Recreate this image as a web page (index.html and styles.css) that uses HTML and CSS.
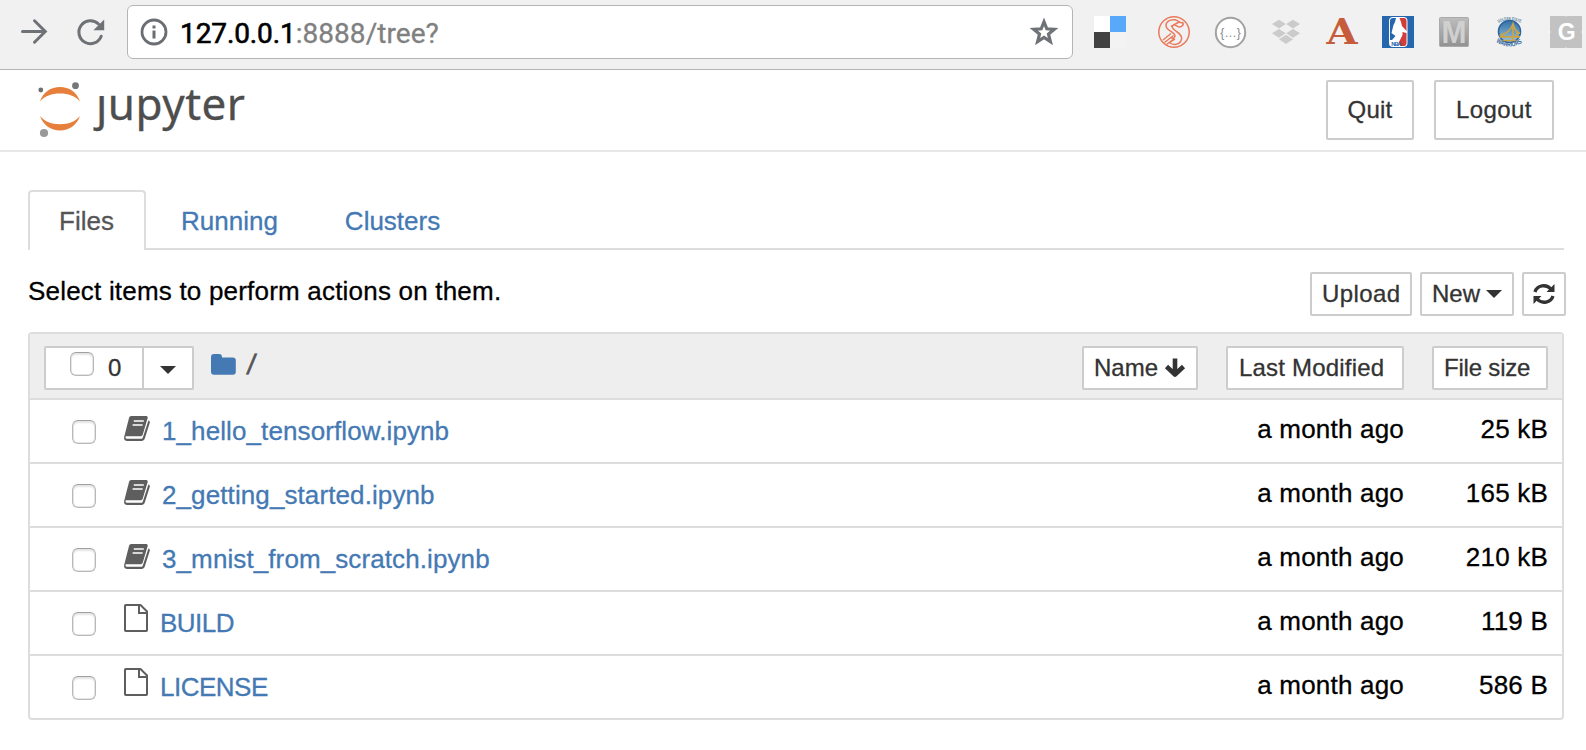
FILE: index.html
```
<!DOCTYPE html>
<html lang="en">
<head>
<meta charset="utf-8">
<title>Home</title>
<link rel="stylesheet" href="styles.css">
</head>
<body>
<svg class="defs" width="0" height="0">
  <symbol id="book" viewBox="0 0 26 25">
    <path d="M7.200 0H22c1.300 0 2 .9 1.600 2.200L18.800 18.500c-.4 1.200-1.300 1.800-2.500 1.800H3c-1.200 0-1.800.6-1.500 1.500.3.800.9 1 1.800 1h13.600c1 0 1.700-.5 2-1.500L24.400 4.500c1.200.3 1.700 1.200 1.400 2.300l-5 15.700c-.5 1.500-1.600 2.500-3.200 2.500H3.200C1.300 25-.4 23.200.1 21.200L5 2C5.400.7 6 0 7.200 0z" fill="#5e5e5e"/>
    <path d="M9.800 5h10M8.600 9h10" stroke="#fff" stroke-width="1.500"/>
  </symbol>
  <symbol id="page" viewBox="0 0 24 28">
    <path d="M1 1.800Q1 1 1.800 1H16.500L23 7.500V26.200q0 .8-.8.800H1.800q-.8 0-.8-.8zM15 1v8h8" fill="none" stroke="#5e5e5e" stroke-width="2"/>
  </symbol>
  <symbol id="caret" viewBox="0 0 16 8"><path d="M0 0h16L8 8z" fill="#333"/></symbol>
</svg>

<div class="toolbar">
  <svg class="forward" width="28" height="28" viewBox="0 0 28 28"><path d="M2.500 13.500h22M14.500 2.800l10.800 10.700L14.500 24.200" fill="none" stroke="#6e7277" stroke-width="3" stroke-linecap="round" stroke-linejoin="miter"/></svg>
  <svg class="reload" width="28" height="28" viewBox="0 0 28 28"><path d="M24.200 18.200A11.500 11.500 0 1 1 21.500 6" fill="none" stroke="#6e7277" stroke-width="3" stroke-linecap="round"/><path d="M27.200 1.500v10.800H16.400z" fill="#6e7277"/></svg>
  <div class="address">
    <svg width="28" height="28" viewBox="0 0 28 28"><circle cx="14" cy="14" r="12" fill="none" stroke="#6a6e73" stroke-width="2.800"/><path d="M12.500 7.500h3v3h-3zM12.500 12.500h3v8h-3z" fill="#6a6e73"/></svg>
    <div class="url"><span class="host">127.0.0.1</span><span class="path">:8888/tree?</span></div>
    <svg class="star" width="30" height="30" viewBox="0 0 30 30"><path d="M15 4.800l2.800 7 7.500.5-5.800 4.800 1.900 7.500-6.400-4.100-6.400 4.100 1.900-7.500-5.800-4.800 7.500-.5z" fill="none" stroke="#6e7277" stroke-width="3.200"/></svg>
  </div>
  <div class="extensions">
    <svg class="first" width="32" height="32"><path d="M0 0h16v16H0z" fill="#fff"/><path d="M16 0h16v16H16z" fill="#58a9fa"/><path d="M0 16h16v16H0z" fill="#424242"/><path d="M16 16h16v16H16z" fill="#f3f3f3"/></svg>
    <svg width="32" height="32" fill="none" stroke="#ea7a5c" stroke-width="1.500"><circle cx="16" cy="16" r="15.200"/><path d="M25 6.500c-3 1.500-4-1.800-8-2.700-5-.8-9.500 2-9 6.200.4 5 9.500 6 9 10.200-.3 2.500-3.500 2.300-5 1.300M25 6.500c1 2-1 4.500-3.500 4.500-3 0-4-3-6-2-3 1.800 0 4.500 3 6.500 4 2.500 6.500 6 4.200 10-2.200 3.500-7.500 4-11.700 1M5 24l8-6.500M6.500 26.500l9-7M8.500 28.500l8-6M13 10.500l8-4.500M11 27l6-4"/></svg>
    <svg width="32" height="32"><circle cx="16.500" cy="16.500" r="14.700" fill="#fff" stroke="#a2a2a2" stroke-width="2"/><text x="16.800" y="20.500" text-anchor="middle" class="json">{...}</text></svg>
    <svg width="32" height="32" fill="#cbcbcb"><path d="M2 8l7-4.200L15.800 8 9 12.500zM16.200 8L23 3.800 30 8l-7 4.500zM2 17.200l7-4.200 6.800 4.200L9 21.700zM16.200 17.200L23 13l7 4.200-7 4.500zM9 23.200l7-4.500 7 4.500-7 4.800z"/></svg>
    <svg width="32" height="32"><text x="0.500" y="28" class="slab" textLength="31" lengthAdjust="spacingAndGlyphs">A</text></svg>
    <svg width="32" height="32"><path d="M0 0h32v32H0z" fill="#2467ae"/><rect x="7" y="1" width="18.500" height="30" rx="4" fill="#fff"/><path d="M17.500 2h4.500q2.500 0 2.500 3v22q0 3-2.500 3h-4l-1-4 3.500-7 0-3 4 1 0-2-4.500-5-1-4z" fill="#d23d3a"/><path d="M8 5q0-3 3-3h3l-1 4-1.500 3-2 8 4 3-3.500 4H8z" fill="#2467ae"/><text x="9.200" y="29.800" class="nba" textLength="10.500">NBA</text></svg>
    <svg width="32" height="32"><defs><linearGradient id="mg" x2="0" y2="1"><stop stop-color="#bdbdbd"/><stop offset="1" stop-color="#929292"/></linearGradient></defs><rect x="1.500" y="1.500" width="29" height="29" rx="1" fill="url(#mg)" stroke="#aaa"/><text x="3.500" y="27" class="mono-m" textLength="25" lengthAdjust="spacingAndGlyphs">M</text></svg>
    <svg width="32" height="32"><defs><linearGradient id="wg" x2="0" y2="1"><stop stop-color="#316fa8"/><stop offset="1" stop-color="#9fc4dc"/></linearGradient><path id="top" d="M4.500 7Q15 1 26.500 7"/><path id="bot" d="M2 26q13.500 9 27 0"/></defs><circle cx="15.500" cy="15.500" r="11" fill="url(#wg)" stroke="#2e659c" stroke-width="1.600"/><path d="M5.500 19q10-1 13.500-11 2 8 7 9.500M5.500 20.800h20.500M8 24.500h15M19 8v16M9 18v4M23 15v7" fill="none" stroke="#c9a548" stroke-width="1.700"/><text class="ring"><textPath href="#top" textLength="23" lengthAdjust="spacingAndGlyphs">GOLDEN STATE</textPath></text><text class="ring low"><textPath href="#bot" textLength="28" lengthAdjust="spacingAndGlyphs">WARRIORS</textPath></text></svg>
    <svg width="32" height="32"><path d="M0 0h15l1 .8L17 0h15v15l-.8 1 .8 1v15H17l-1-.8-1 .8H0V17l.8-1-.8-1z" fill="#c2c2c2"/><text x="16.700" y="24" text-anchor="middle" class="g">G</text></svg>
  </div>
</div>

<header class="header">
  <div class="logo">
    <svg width="44" height="56" viewBox="0 0 44 56"><g fill="#e67f3c"><path d="M2 19.500C5 10 13 5 22 5s17 5 20 14.500C37 14 30.500 11.600 22 11.600S7 14 2 19.500z"/><path d="M2 34C5 43 13 48.500 22 48.500S39 43 42 34c-5 5.800-11.500 8.200-20 8.200S7 39.800 2 34z"/></g><circle cx="2.800" cy="8" r="2.400" fill="#6f6f6f"/><circle cx="37.500" cy="3.700" r="3.400" fill="#777"/><circle cx="6" cy="51" r="4.100" fill="#999"/></svg>
    <div class="wordmark"><span class="j">j</span>upyter</div>
  </div>
  <div class="session">
    <button class="btn big quit">Quit</button>
    <button class="btn big logout">Logout</button>
  </div>
</header>

<main class="main">
  <nav class="tabs">
    <a class="tab active">Files</a>
    <a class="tab">Running</a>
    <a class="tab">Clusters</a>
  </nav>
  <div class="actions">
    <div class="hint">Select items to perform actions on them.</div>
    <div class="buttons">
      <button class="btn upload">Upload</button>
      <button class="btn new">New<svg width="16" height="8"><use href="#caret"/></svg></button>
      <button class="btn refresh"><svg width="22" height="22" viewBox="0 0 22 22"><g fill="none" stroke="#333" stroke-width="3.300"><path d="M2 9A9 8.300 0 0 1 17.800 6"/><path d="M20 13A9 8.300 0 0 1 4.200 16"/></g><path d="M21.500 1v8h-8zM.5 21v-8h8z" fill="#333"/></svg></button>
    </div>
  </div>
  <section class="list">
    <div class="list-head">
      <div class="selector">
        <div class="select-all"><span class="check"></span><span class="count">0</span></div>
        <div class="select-menu"><svg width="16" height="8"><use href="#caret"/></svg></div>
      </div>
      <div class="crumb">
        <svg width="25" height="21" viewBox="0 0 25 21"><path d="M0 3Q0 0 3 0h5q3 0 3 3v.6h10.800q3 0 3 3V17.700q0 3-3 3H3q-3 0-3-3z" fill="#4479b4"/></svg>
        <span>/</span>
      </div>
      <div class="sorts">
        <button class="btn name">Name<svg width="22" height="21" viewBox="0 0 22 21"><path d="M11 1.500V17M2.500 9.500L11 17.500l8.500-8" fill="none" stroke="#333" stroke-width="4.600" stroke-linejoin="round"/></svg></button>
        <button class="btn modified">Last Modified</button>
        <button class="btn size">File size</button>
      </div>
    </div>
    <div class="row"><span class="check"></span><svg class="icon" width="26" height="25"><use href="#book"/></svg><a class="item">1_hello_tensorflow.ipynb</a><span class="time">a month ago</span><span class="bytes">25 kB</span></div>
    <div class="row"><span class="check"></span><svg class="icon" width="26" height="25"><use href="#book"/></svg><a class="item">2_getting_started.ipynb</a><span class="time">a month ago</span><span class="bytes">165 kB</span></div>
    <div class="row"><span class="check"></span><svg class="icon" width="26" height="25"><use href="#book"/></svg><a class="item">3_mnist_from_scratch.ipynb</a><span class="time">a month ago</span><span class="bytes">210 kB</span></div>
    <div class="row file"><span class="check"></span><svg class="icon" width="24" height="28"><use href="#page"/></svg><a class="item">BUILD</a><span class="time">a month ago</span><span class="bytes">119 B</span></div>
    <div class="row file"><span class="check"></span><svg class="icon" width="24" height="28"><use href="#page"/></svg><a class="item">LICENSE</a><span class="time">a month ago</span><span class="bytes">586 B</span></div>
  </section>
</main>
</body>
</html>
```
FILE: styles.css
```
* { box-sizing: border-box; }
body {
  margin: 0;
  background: #fff;
  color: #000;
  font: 26px/30px "Liberation Sans", Arial, sans-serif;
  -webkit-text-stroke: .3px;
  overflow: hidden;
}
svg { display: block; flex: none; overflow: visible; }
svg text { -webkit-text-stroke: 0; }
.defs { position: absolute; }

.toolbar {
  display: flex;
  align-items: flex-start;
  height: 70px;
  padding-left: 20px;
  background: #f1f1f1;
  border-bottom: 1px solid #b4b4b4;
}
.forward { margin-top: 18px; }
.reload { margin: 18px 0 0 29px; }
.address {
  display: flex;
  align-items: center;
  width: 946px;
  height: 54px;
  margin: 5px 0 0 22px;
  padding: 0 13px 0 12px;
  background: #fff;
  border: 1px solid #b5b5b5;
  border-radius: 6px;
}
.url {
  flex: 1;
  margin: 3px 0 0 12px;
  font: 28px/34px Roboto, sans-serif;
  letter-spacing: .05px;
  white-space: nowrap;
  color: #808080;
}
.host { color: #000; -webkit-text-stroke: .6px #000; letter-spacing: -.1px; }
.extensions { display: flex; gap: 24px; margin: 16px 0 0 21px; }
.first { margin-right: 8px; }
.json { font: 12px "Liberation Sans", sans-serif; fill: #888; letter-spacing: .6px; }
.slab { font: bold 35px "DejaVu Serif", serif; fill: #c75c3c; }
.nba { font: bold 6px "Liberation Sans", sans-serif; fill: #2467ae; }
.mono-m { font: bold 31px "Liberation Sans", sans-serif; fill: #d0d0d0; }
.g { font: bold 23px "Liberation Sans", sans-serif; fill: #fff; }
.ring { font: bold 4.500px "Liberation Sans", sans-serif; fill: #577f9f; }
.low { font-size: 6.500px; fill: #2e659c; }

.header {
  display: flex;
  justify-content: space-between;
  height: 82px;
  padding: 10px 32px 0 38px;
  border-bottom: 2px solid #e7e7e7;
}
.logo { display: flex; margin-top: 2px; }
.wordmark {
  margin: -9px 0 0 14px;
  font: 44px/60px "Noto Sans", sans-serif;
  color: #4e4e4e;
  letter-spacing: .5px;
}
.j { display: inline-block; clip-path: inset(23px -10px -10px -10px); }
.session { display: flex; gap: 20px; }
.btn {
  display: flex;
  align-items: center;
  height: 44px;
  margin: 0;
  padding: 0 10px 1px;
  background: #fff;
  color: #333;
  border: 2px solid #ccc;
  border-radius: 2px;
  font: 24px/28px "Liberation Sans", Arial, sans-serif;
  -webkit-text-stroke: .3px;
  white-space: nowrap;
}
.big { height: 60px; justify-content: center; }
.quit { width: 88px; letter-spacing: .2px; }
.logout { width: 120px; letter-spacing: .4px; }

.main { padding: 38px 20px 0 28px; }
.tabs {
  display: flex;
  gap: 4px;
  height: 60px;
  margin-right: 2px;
  border-bottom: 2px solid #ddd;
}
.tab {
  height: 60px;
  padding: 14px 30px 0 29px;
  border: 2px solid transparent;
  border-bottom: 0;
  border-radius: 4px 4px 0 0;
  color: #4479b4;
}
.active { background: #fff; border-color: #ddd; color: #555; width: 118px; }
.actions { display: flex; justify-content: space-between; margin-top: 22px; height: 60px; }
.hint { padding-top: 4px; letter-spacing: .2px; }
.buttons { display: flex; gap: 8px; }
.upload { width: 102px; letter-spacing: .4px; }
.new { width: 94px; gap: 6px; }
.refresh { width: 44px; padding: 0 9px; }

.list {
  margin-right: 2px;
  border: 2px solid #ddd;
  border-radius: 4px;
}
.list-head {
  display: flex;
  height: 66px;
  padding: 12px 14px 0;
  background: #eee;
  border-bottom: 2px solid #ddd;
}
.selector {
  display: flex;
  width: 150px;
  height: 44px;
  background: #fff;
  border: 2px solid #ccc;
  border-radius: 2px;
}
.select-all { display: flex; width: 98px; padding: 4px 0 0 24px; border-right: 2px solid #ccc; }
.count { margin: 1px 0 0 14px; font-size: 24px; line-height: 30px; color: #333; }
.select-menu { padding: 18px 0 0 16px; }
.check {
  flex: none;
  width: 24px;
  height: 24px;
  background: #fff;
  border: 1.500px solid #b8b8b8;
  border-top-color: #a0a0a0;
  border-radius: 6px;
  box-shadow: inset 0 2px 2px #e4e4e4, inset 0 0 0 .5px #ccc;
}
.crumb { display: flex; gap: 9px; margin: 8px 0 0 17px; color: #555; }
.crumb span { font-size: 28px; line-height: 21px; -webkit-text-stroke: .6px #555; transform: skewX(-8deg); margin-left: 1px; }
.sorts { display: flex; gap: 28px; margin-left: auto; }
.name { width: 116px; gap: 6px; }
.modified { width: 178px; padding-left: 11px; letter-spacing: .2px; }
.size { width: 116px; letter-spacing: -.2px; }

.row {
  display: flex;
  height: 64px;
  padding: 0 14px 0 42px;
  border-bottom: 2px solid #ddd;
}
.row:last-child { height: 62px; border-bottom: 0; }
.row .check { margin-top: 20px; }
.icon { margin: 16px 0 0 28px; }
.file .icon { margin-top: 12px; }
.item { margin: 16px 0 0 12px; color: #4479b4; letter-spacing: .1px; }
.file .item { letter-spacing: -.5px; }
.time { margin: 14px 0 0 auto; letter-spacing: .2px; }
.bytes { width: 144px; margin-top: 14px; text-align: right; letter-spacing: .2px; }
```
